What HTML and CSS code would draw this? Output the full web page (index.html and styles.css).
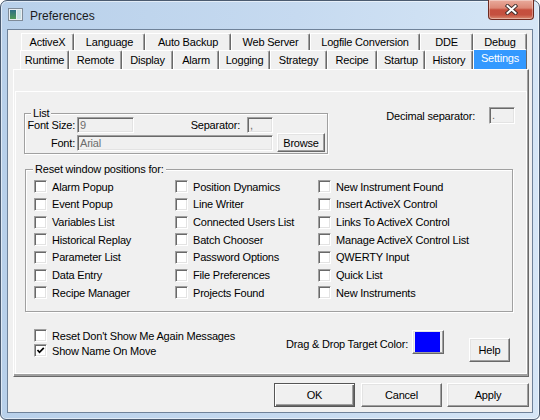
FILE: index.html
```html
<!DOCTYPE html>
<html>
<head>
<meta charset="utf-8">
<title>Preferences</title>
<link rel="stylesheet" href="styles.css">
</head>
<body>
<div class="window">
  <div class="titlebar">
    <svg class="appicon" width="15" height="13" viewBox="0 0 15 13">
      <defs>
        <linearGradient id="ig" x1="0" y1="0" x2="0" y2="1">
          <stop offset="0" stop-color="#2f6f86"/>
          <stop offset="1" stop-color="#4f9a58"/>
        </linearGradient>
      </defs>
      <rect x="0.5" y="0.5" width="14" height="12" fill="#e9eef2" stroke="#7f8b98"/>
      <rect x="2" y="2" width="6" height="9" fill="url(#ig)"/>
      <rect x="9" y="2" width="4" height="9" fill="#c9e0e6"/>
    </svg>
    <span class="title">Preferences</span>
    <div class="close">
      <svg width="13" height="11" viewBox="0 0 13 11">
        <path class="xo" d="M2.5 2 L10.5 9 M10.5 2 L2.5 9"/>
        <path class="xi" d="M2.5 2 L10.5 9 M10.5 2 L2.5 9"/>
      </svg>
    </div>
  </div>
  <div class="client">
    <div class="tabrow row1">
      <div class="tab">ActiveX</div>
      <div class="tab">Language</div>
      <div class="tab">Auto Backup</div>
      <div class="tab">Web Server</div>
      <div class="tab">Logfile Conversion</div>
      <div class="tab">DDE</div>
      <div class="tab">Debug</div>
    </div>
    <div class="tabrow row2">
      <div class="tab">Runtime</div>
      <div class="tab">Remote</div>
      <div class="tab">Display</div>
      <div class="tab">Alarm</div>
      <div class="tab">Logging</div>
      <div class="tab">Strategy</div>
      <div class="tab">Recipe</div>
      <div class="tab">Startup</div>
      <div class="tab">History</div>
      <div class="tab sel">Settings</div>
    </div>
    <div class="panel">
      <div class="page">
        <div class="sec-a">
          <fieldset class="group list">
            <legend>List</legend>
            <div class="frow r1">
              <span class="lbl">Font Size:</span>
              <div class="field fs">9</div>
              <div class="sepgrp">
                <span>Separator:</span>
                <div class="field small">,</div>
              </div>
            </div>
            <div class="frow r2">
              <span class="lbl">Font:</span>
              <div class="field font">Arial</div>
              <div class="btn browse">Browse</div>
            </div>
          </fieldset>
          <div class="decimal">
            <span>Decimal separator:</span>
            <div class="field small tall">.</div>
          </div>
        </div>
        <fieldset class="group reset">
          <legend>Reset window positions for:</legend>
          <div class="checks">
            <div class="chk"><span class="box"></span>Alarm Popup</div>
            <div class="chk"><span class="box"></span>Event Popup</div>
            <div class="chk"><span class="box"></span>Variables List</div>
            <div class="chk"><span class="box"></span>Historical Replay</div>
            <div class="chk"><span class="box"></span>Parameter List</div>
            <div class="chk"><span class="box"></span>Data Entry</div>
            <div class="chk"><span class="box"></span>Recipe Manager</div>
            <div class="chk"><span class="box"></span>Position Dynamics</div>
            <div class="chk"><span class="box"></span>Line Writer</div>
            <div class="chk"><span class="box"></span>Connected Users List</div>
            <div class="chk"><span class="box"></span>Batch Chooser</div>
            <div class="chk"><span class="box"></span>Password Options</div>
            <div class="chk"><span class="box"></span>File Preferences</div>
            <div class="chk"><span class="box"></span>Projects Found</div>
            <div class="chk"><span class="box"></span>New Instrument Found</div>
            <div class="chk"><span class="box"></span>Insert ActiveX Control</div>
            <div class="chk"><span class="box"></span>Links To ActiveX Control</div>
            <div class="chk"><span class="box"></span>Manage ActiveX Control List</div>
            <div class="chk"><span class="box"></span>QWERTY Input</div>
            <div class="chk"><span class="box"></span>Quick List</div>
            <div class="chk"><span class="box"></span>New Instruments</div>
          </div>
        </fieldset>
        <div class="sec-c">
          <div class="bottomchecks">
            <div class="chk"><span class="box"></span>Reset Don't Show Me Again Messages</div>
            <div class="chk"><span class="box"><svg width="9" height="9" viewBox="0 0 9 9"><polyline points="1.5,4 3.5,6.3 7.8,1.8" class="tick"/></svg></span>Show Name On Move</div>
          </div>
          <div class="colorgrp">
            <span class="clbl">Drag &amp; Drop Target Color:</span>
            <div class="btn colorbtn"><div class="swatch"></div></div>
          </div>
          <div class="btn help">Help</div>
        </div>
      </div>
    </div>
    <div class="buttons">
      <div class="btn dlg def">OK</div>
      <div class="btn dlg cancel">Cancel</div>
      <div class="btn dlg apply">Apply</div>
    </div>
  </div>
</div>
</body>
</html>
```

FILE: styles.css
```css
* { box-sizing: border-box; }
html, body { margin: 0; padding: 0; }
body {
  width: 540px;
  height: 420px;
  overflow: hidden;
  background: #ffffff;
  font-family: "Liberation Sans", Arial, sans-serif;
  font-size: 11px;
  letter-spacing: -0.2px;
  color: #000;
}

.window {
  width: 540px;
  height: 420px;
  border: 1px solid #4b5b70;
  border-radius: 7px 7px 6px 6px;
  background: linear-gradient(90deg, #b8d0ea 0%, #c6daf0 55%, #d6e6f6 100%);
  box-shadow: inset 0 0 0 1px rgba(255, 255, 255, 0.55);
  display: flex;
  flex-direction: column;
}

.titlebar {
  height: 28px;
  flex-shrink: 0;
  display: flex;
  align-items: flex-start;
}
.appicon { margin: 7px 0 0 7px; flex-shrink: 0; }
.title {
  margin: 8px 0 0 7px;
  font-size: 12px;
  line-height: 14px;
  letter-spacing: 0;
  color: #1b1b1b;
}
.close {
  margin: -1px 5px 0 auto;
  width: 46px;
  height: 20px;
  border: 1px solid #6e2a20;
  border-top: none;
  border-radius: 0 0 4px 4px;
  background: linear-gradient(#e9ab9c 0%, #dc8876 42%, #c64f3d 52%, #c4503f 78%, #d98a70 100%);
  box-shadow: inset 0 0 0 1px rgba(255, 255, 255, 0.35);
  display: flex;
  align-items: center;
  justify-content: center;
}
.xo { stroke: #3a2a28; stroke-width: 3.8; fill: none; stroke-linecap: square; }
.xi { stroke: #ffffff; stroke-width: 2; fill: none; stroke-linecap: square; }

.client {
  flex: 1;
  margin: 0 6px 6px 6px;
  border: 1px solid #6f8299;
  background: #f0f0f0;
  padding-top: 3px;
  display: flex;
  flex-direction: column;
}

/* tabs */
.tabrow { display: grid; }
.row1 {
  margin-left: 13px;
  height: 17px;
  grid-template-columns: 53px 71px 86px 79px 110px 53px 54px;
}
.row2 {
  margin-left: 12px;
  height: 19px;
  grid-template-columns: 49px 53px 51px 46px 51px 57px 50px 48px 48px 54px;
}
.tab {
  border-top: 1px solid #ffffff;
  border-left: 1px solid #ffffff;
  border-right: 1px solid #696969;
  border-top-right-radius: 2px;
  box-shadow: inset -1px 0 0 #a0a0a0;
  background: #f0f0f0;
  display: flex;
  align-items: center;
  justify-content: center;
  line-height: 12px;
  white-space: nowrap;
}
.tab.sel {
  margin-top: -1px;
  height: 20px;
  background: #3399ff;
  color: #ffffff;
  align-items: flex-start;
  padding-top: 2px;
  box-shadow: none;
  position: relative;
}

.panel {
  margin-left: 5px;
  width: 516px;
  height: 308px;
  flex-shrink: 0;
  border-top: 1px solid #ffffff;
  border-left: 1px solid #ffffff;
  border-right: 1px solid #696969;
  border-bottom: 1px solid #696969;
  box-shadow: inset -1px -2px 0 #a0a0a0;
  padding: 21px 1px 2px 1px;
  display: flex;
  flex-direction: column;
}
.page {
  flex: 1;
  border: 1px solid #ffffff;
  padding-top: 15px;
  display: flex;
  flex-direction: column;
}

/* group boxes */
.group {
  margin: 0;
  padding: 0;
  min-width: 0;
  border: 1px solid #a0a0a0;
  box-shadow: 1px 1px 0 #ffffff, inset 1px 1px 0 #ffffff;
}
.group legend {
  padding: 0 2px;
  line-height: 12px;
  background: #f0f0f0;
}

.sec-a {
  display: flex;
  align-items: flex-start;
  height: 47px;
  flex-shrink: 0;
}
.list {
  margin-left: 8px;
  width: 304px;
  height: 47px;
}
.list legend { margin-left: 6px; }
.frow { display: flex; align-items: center; }
.r1 { margin-top: -2px; height: 16px; width: 248px; }
.r2 { height: 19px; }
.lbl {
  width: 50px;
  text-align: right;
  margin-right: 2px;
  white-space: nowrap;
}
.sepgrp { margin-left: auto; display: flex; align-items: center; }
.sepgrp span { margin-right: 7px; }

.field {
  height: 16px;
  border: 1px solid;
  border-color: #a0a0a0 #ffffff #ffffff #a0a0a0;
  box-shadow: inset 1px 1px 0 #696969, inset -1px -1px 0 #e3e3e3;
  background: #f0f0f0;
  color: #6d6d6d;
  padding-left: 2px;
  line-height: 14px;
  white-space: nowrap;
}
.fs { width: 57px; }
.small { width: 26px; }
.tall { height: 17px; }
.font { width: 196px; }

.decimal {
  margin: 0 11px 0 auto;
  display: flex;
  align-items: center;
}
.decimal span { margin-right: 14px; }

.btn {
  display: flex;
  align-items: center;
  justify-content: center;
  background: #f0f0f0;
  border: 1px solid;
  border-color: #ffffff #696969 #696969 #ffffff;
  box-shadow: inset -1px -1px 0 #a0a0a0, inset 1px 1px 0 #e3e3e3;
  white-space: nowrap;
}
.browse { margin-left: 4px; width: 48px; height: 19px; }

.reset {
  margin: 9px 0 0 9px;
  width: 488px;
  height: 149px;
  flex-shrink: 0;
}
.reset legend { margin-left: 7px; }
.checks {
  margin-top: 3px;
  padding-left: 8px;
  display: grid;
  grid-template-columns: 141px 143px auto;
  grid-template-rows: repeat(7, 17.67px);
  grid-auto-flow: column;
}
.chk {
  display: flex;
  align-items: center;
  white-space: nowrap;
}
.box {
  width: 13px;
  height: 13px;
  margin-right: 5px;
  flex-shrink: 0;
  background: #ffffff;
  border: 1px solid;
  border-color: #a0a0a0 #ffffff #ffffff #a0a0a0;
  box-shadow: inset 1px 1px 0 #696969, inset -1px -1px 0 #e3e3e3;
  display: flex;
  align-items: center;
  justify-content: center;
}
.tick { fill: none; stroke: #000; stroke-width: 1.7; }

.sec-c {
  margin-top: 16px;
  padding-left: 18px;
  display: flex;
  align-items: flex-start;
}
.bottomchecks .chk { height: 15px; }
.colorgrp {
  margin: 2px 0 0 auto;
  display: flex;
  align-items: center;
}
.clbl { margin-right: 4px; padding-top: 3px; }
.colorbtn {
  width: 32px;
  height: 24px;
  padding: 1px 3px 1px 2px;
}
.swatch { width: 100%; height: 100%; background: #0000ff; }
.help {
  margin: 10px 16px 0 25px;
  width: 41px;
  height: 24px;
}

.buttons {
  margin-top: 6px;
  padding-right: 3px;
  display: flex;
  justify-content: flex-end;
}
.dlg { height: 24px; width: 81px; }
.def {
  margin-right: 6px;
  border-color: #555555;
  box-shadow: inset 1px 1px 0 #ffffff, inset -1px -1px 0 #696969, inset -2px -2px 0 #a0a0a0;
}
.cancel { margin-right: 5px; }
.apply { width: 82px; }
```
